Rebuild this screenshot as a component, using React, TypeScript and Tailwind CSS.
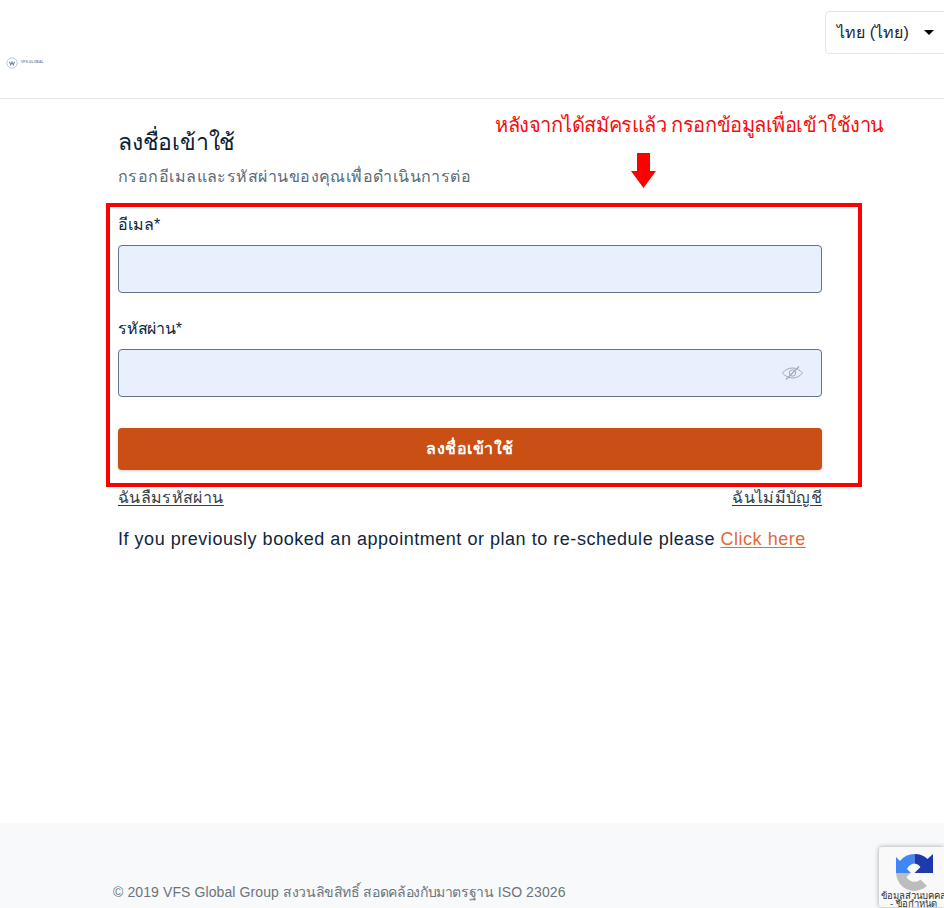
import React from "react";

function Logo() {
  return (
    <div className="flex items-center gap-[3px]">
      <svg width="12" height="12" viewBox="0 0 13 13">
        <circle cx="6.5" cy="6.5" r="5.6" fill="none" stroke="#a9b8ca" strokeWidth="0.8" />
        <path d="M3.600 5l1.500 3.600L6.500 5.400 7.900 8.600 9.400 5" fill="none" stroke="#6f86a3" strokeWidth="1.100" />
      </svg>
      <span className="text-[3.500px] font-bold text-[#7f8da0] leading-none font-['Liberation_Sans',sans-serif]">VFS.GLOBAL</span>
    </div>
  );
}

function EyeOff() {
  return (
    <svg width="21" height="16" viewBox="0 0 21 16" fill="none" stroke="#a2a9b1" strokeWidth="1">
      <path d="M0.500 8c3-3.400 6.200-5 10-5s7 1.600 10 5c-3 3.400-6.200 5-10 5s-7-1.600-10-5z" />
      <circle cx="10.500" cy="8" r="3.200" />
      <path d="M17 1.500 4 14.500" strokeWidth="1.200" />
    </svg>
  );
}

function Recaptcha() {
  return (
    <div className="absolute left-[879px] top-[847px] w-[65px] h-[60px] bg-[#f9f9f9] rounded-l-[3px] shadow-[0_0_5px_rgba(0,0,0,0.35)] overflow-hidden">
      <svg className="absolute left-[16px] top-[6px]" width="39" height="39" viewBox="0 0 39 39">
        <path d="M1 20A18.500 18.500 0 0 0 32 33L25.500 26.500A9 9 0 0 1 11.500 24L15.500 20Z" fill="#bdbdbd" />
        <path d="M19.500 1A18.500 18.500 0 0 0 5 8L1 4V20H16L12 16A9.500 9.500 0 0 1 19.500 10.500Z" fill="#4285f4" />
        <path d="M19.500 1A18.500 18.500 0 0 1 32.500 6L38 1V20H19.500L25.500 14A9 9 0 0 0 19.500 10.500Z" fill="#1c3aa9" />
      </svg>
      <div className="absolute left-[2px] top-[44px] whitespace-nowrap text-[9.500px] leading-[9px] text-[#333] font-['Liberation_Sans',sans-serif]">
        ข้อมูลส่วนบุคคล
      </div>
      <div className="absolute left-[11px] top-[52px] whitespace-nowrap text-[9.500px] leading-[9px] text-[#333] font-['Liberation_Sans',sans-serif]">
        - ข้อกำหนด
      </div>
    </div>
  );
}

export default function App() {
  return (
    <div className="relative w-[944px] h-[908px] overflow-hidden bg-white flex flex-col font-['Liberation_Sans',sans-serif] text-[#10263b]">
      <header className="h-[99px] shrink-0 border-b border-[#e4e6e8] flex justify-between">
        <div className="pl-[6px] pt-[57px]">
          <Logo />
        </div>
        <div className="pt-[11px]">
          <div className="w-[119px] h-[43px] border border-r-0 border-[#e3e5e8] rounded-l-[5px] flex items-center pl-[11px] text-[16px] text-[#212529] tracking-[0.1px]">
            <span>ไทย (ไทย)</span>
            <span className="ml-[15px] w-0 h-0 border-x-[5px] border-x-transparent border-t-[5px] border-t-black" />
          </div>
        </div>
      </header>

      <main className="flex-1 pl-[118px] w-[822px]">
        <h1 className="mt-[27px] text-[23px] leading-[32px] text-[#0d2136] tracking-[-0.2px]">ลงชื่อเข้าใช้</h1>
        <p className="mt-[7px] text-[16px] leading-[24px] text-[#5c6b7a] tracking-[0.45px]">
          กรอกอีเมลและรหัสผ่านของคุณเพื่อดำเนินการต่อ
        </p>
        <label className="block mt-[24px] text-[16px] leading-[24px] text-[#10263b]">อีเมล*</label>
        <div className="mt-[8px] h-[48px] bg-[#e8f0fe] border border-[#64748b] rounded-[4px]" />
        <label className="block mt-[24px] text-[16px] leading-[24px] text-[#10263b] tracking-[-0.2px]">รหัสผ่าน*</label>
        <div className="mt-[8px] h-[48px] bg-[#e8f0fe] border border-[#64748b] rounded-[4px] flex items-center justify-end pr-[18px]">
          <EyeOff />
        </div>
        <button className="mt-[31px] w-full h-[42px] bg-[#ca4f14] rounded-[4px] shadow-[0_1px_3px_rgba(0,0,0,0.2)] text-white font-bold text-[16px] tracking-[0.5px]">
          ลงชื่อเข้าใช้
        </button>
        <div className="mt-[16px] flex justify-between text-[16px] leading-[24px] text-[#333f4a] underline underline-offset-[2px] tracking-[0.35px]">
          <a>ฉันลืมรหัสผ่าน</a>
          <a>ฉันไม่มีบัญชี</a>
        </div>
        <p className="mt-[17px] text-[18px] leading-[24px] tracking-[0.53px] text-[#10263b] whitespace-nowrap">
          If you previously booked an appointment or plan to re-schedule please{" "}
          <a className="text-[#df6a38] underline underline-offset-[2px]">Click here</a>
        </p>
      </main>

      <footer className="h-[85px] shrink-0 bg-[#f8f9fa] pl-[113px] pt-[59px] text-[14px] leading-[21px] text-[#6c757d] tracking-[0.1px]">
        © 2019 VFS Global Group <span className="tracking-[-0.35px]">สงวนลิขสิทธิ์ สอดคล้องกับมาตรฐาน</span> ISO 23026
      </footer>

      <div className="absolute left-[106px] top-[203px] w-[756px] h-[284px] border-[4px] border-[#ff0000] pointer-events-none" />
      <div className="absolute left-[495px] top-[109px] text-[20px] font-light tracking-[-0.45px] leading-[32px] text-[#f60d0d] whitespace-nowrap">
        หลังจากได้สมัครแล้ว กรอกข้อมูลเพื่อเข้าใช้งาน
      </div>
      <svg className="absolute left-[631px] top-[153px]" width="25" height="35" viewBox="0 0 25 35">
        <path d="M6 0h13v18h6L12.500 35 0 18h6z" fill="#ff0000" />
      </svg>
      <Recaptcha />
    </div>
  );
}
